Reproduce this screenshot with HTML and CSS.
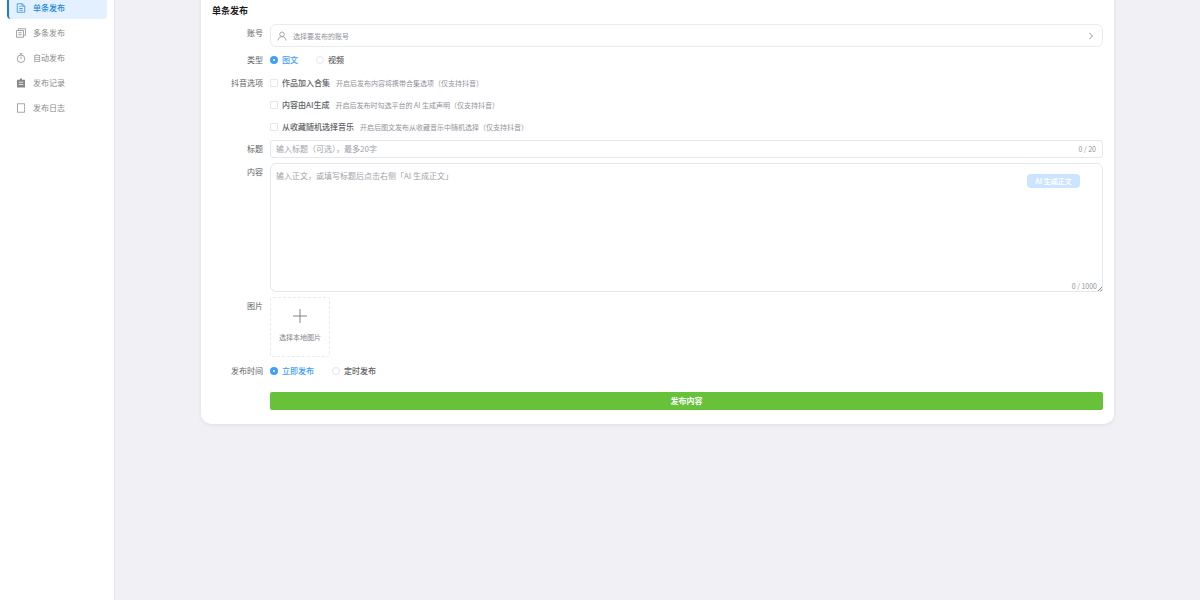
FILE: index.html
```html
<!DOCTYPE html>
<html lang="zh-CN">
<head>
  <meta charset="utf-8">
  <title>单条发布</title>
  <link rel="stylesheet" href="styles.css">
</head>
<body>
  <div class="layout">
    <nav class="sidebar">
      <a class="menu-item active" href="#">
        <svg class="icon" viewBox="0 0 20 20"><path d="M2.500 1.500h10l5 5v12h-15zM12 1.500v5h5M6.500 7h3M6.500 11h7M6.500 14.500h7"/></svg>
        单条发布
      </a>
      <a class="menu-item" href="#">
        <svg class="icon" viewBox="0 0 20 20"><path d="M5 5V1.500h14v13h-4M1 5h14v13.500H1zM4.500 9.500h7M4.500 13.500h7"/></svg>
        多条发布
      </a>
      <a class="menu-item" href="#">
        <svg class="icon" viewBox="0 0 20 20"><circle cx="10" cy="11.500" r="7.500"/><path d="M10 7v5M7 1.500h6M10 1.500V4"/></svg>
        自动发布
      </a>
      <a class="menu-item" href="#">
        <svg class="icon" viewBox="0 0 20 20"><path class="solid" d="M2 3.500h6V1h4v2.500h6V19H2z"/><path class="cut" d="M5.500 8.500h9M5.500 13h9"/></svg>
        发布记录
      </a>
      <a class="menu-item" href="#">
        <svg class="icon" viewBox="0 0 20 20"><path d="M17 1.500H3v17h14"/><path d="M17 1.500v17" stroke-width="2" stroke-dasharray="2 1"/></svg>
        发布日志
      </a>
    </nav>

    <main class="main">
      <form class="card">
        <h1 class="card-title">单条发布</h1>

        <div class="row">
          <label class="row-label" for="account">账号</label>
          <button class="account" id="account" type="button">
            <svg class="icon" viewBox="0 0 20 20"><circle cx="10" cy="6.500" r="4.500"/><path d="M2 19c0-5 3-7.500 8-7.500s8 2.500 8 7.500"/></svg>
            <span class="account-text">选择要发布的账号</span>
            <svg class="arrow" viewBox="0 0 8 8"><path d="M2.500 1l3 3-3 3"/></svg>
          </button>
        </div>

        <div class="row">
          <span class="row-label">类型</span>
          <div class="radios">
            <label class="choice"><input class="radio" type="radio" name="type" checked><span>图文</span></label>
            <label class="choice"><input class="radio" type="radio" name="type"><span>视频</span></label>
          </div>
        </div>

        <div class="row">
          <span class="row-label">抖音选项</span>
          <div class="options">
            <label class="choice"><input class="check" type="checkbox"><span>作品加入合集</span><small class="hint">开启后发布内容将携带合集选项（仅支持抖音）</small></label>
            <label class="choice"><input class="check" type="checkbox"><span>内容由AI生成</span><small class="hint">开启后发布时勾选平台的 AI 生成声明（仅支持抖音）</small></label>
            <label class="choice"><input class="check" type="checkbox"><span>从收藏随机选择音乐</span><small class="hint">开启后图文发布从收藏音乐中随机选择（仅支持抖音）</small></label>
          </div>
        </div>

        <div class="row">
          <label class="row-label" for="title">标题</label>
          <div class="title-box">
            <input class="title-input" id="title" type="text" maxlength="20" placeholder="输入标题（可选），最多20字">
            <span class="count">0 / 20</span>
          </div>
        </div>

        <div class="row">
          <label class="row-label" for="content">内容</label>
          <div class="content-box">
            <textarea class="content-input" id="content" maxlength="1000" placeholder="输入正文，或填写标题后点击右侧「AI 生成正文」"></textarea>
            <button class="ai-btn" type="button" disabled>AI 生成正文</button>
            <span class="count content-count">0 / 1000</span>
            <svg class="grip" viewBox="0 0 6 6"><path d="M1 5l4-4M3.500 5.500l2-2"/></svg>
          </div>
        </div>

        <div class="row">
          <label class="row-label" for="upload">图片</label>
          <button class="upload" id="upload" type="button">
            <svg class="plus" viewBox="0 0 14 14"><path d="M7 0v14M0 7h14"/></svg>
            选择本地图片
          </button>
        </div>

        <div class="row">
          <span class="row-label">发布时间</span>
          <div class="radios">
            <label class="choice"><input class="radio" type="radio" name="time" checked><span>立即发布</span></label>
            <label class="choice"><input class="radio" type="radio" name="time"><span>定时发布</span></label>
          </div>
        </div>

        <div class="row submit-row">
          <button class="submit" type="submit">发布内容</button>
        </div>
      </form>
    </main>
  </div>
</body>
</html>
```
FILE: styles.css
```css
* {
  box-sizing: border-box;
}
body {
  margin: 0;
  font: 8px/18px "Noto Sans CJK SC", sans-serif;
  color: #606266;
  background: #f0f0f5;
}
button, input, textarea {
  font: inherit;
  color: inherit;
  margin: 0;
}
svg {
  flex: none;
  fill: none;
  stroke: currentColor;
}
.layout {
  display: flex;
  min-height: 100vh;
}

/* sidebar, scrolled a little past its top */
.sidebar {
  display: flex;
  flex-direction: column;
  gap: 3px;
  flex: none;
  width: 115px;
  margin-top: -3px;
  padding: 0 7px;
  background: #fff;
  border-right: 1px solid #e8e8ec;
}
.menu-item {
  display: flex;
  align-items: center;
  gap: 7px;
  height: 22px;
  padding-left: 9px;
  border-radius: 4px;
  color: #888;
  text-decoration: none;
}
.menu-item.active {
  padding-left: 7px;
  border-left: 2px solid #1a7fd4;
  background: #e3f0ff;
  color: #2088d8;
  font-weight: 500;
}
.icon {
  width: 10px;
  height: 10px;
  stroke-width: 1.5;
}
.icon .solid {
  fill: currentColor;
  stroke: none;
}
.icon .cut {
  stroke: #fff;
}

/* form card */
.main {
  flex: 1;
  padding: 0 86px;
}
.card {
  display: flex;
  flex-direction: column;
  gap: 5px;
  margin-top: -10px;
  padding: 13px 11px 14px;
  background: #fff;
  border-radius: 10px;
  box-shadow: 0 1px 4px rgba(0, 0, 0, 0.08);
}
.card-title {
  margin: 0;
  font-size: 9px;
  line-height: 16px;
  color: #1a1a1a;
}
.row {
  display: flex;
  gap: 7px;
}
.row-label {
  flex: none;
  width: 51px;
  text-align: right;
}
.account {
  display: flex;
  align-items: center;
  flex: 1;
  height: 23px;
  margin-bottom: -1px;
  padding: 0 7px 0 6px;
  border: 1px solid #ebebef;
  border-radius: 6px;
  background: #fff;
  color: #909399;
}
.account-text {
  flex: 1;
  padding-left: 6px;
  font-size: 7px;
  text-align: left;
}
.arrow {
  width: 8px;
  height: 8px;
}
.radios {
  display: flex;
  gap: 18px;
}
.options {
  display: flex;
  flex-direction: column;
  gap: 4px;
  margin-bottom: -1px;
}
.choice {
  display: flex;
  align-items: center;
  gap: 4px;
  font-weight: 500;
}
.radio, .check {
  appearance: none;
  width: 8px;
  height: 8px;
  border: 1px solid #e4e6eb;
  border-radius: 50%;
  background: #fff;
}
.check {
  border-radius: 1px;
}
.radio:checked {
  border: 3px solid #409eff;
}
.radio:checked + span {
  color: #409eff;
}
.hint {
  padding-left: 2px;
  font-size: 7px;
  font-weight: 400;
  color: #909399;
}
.title-box {
  display: flex;
  flex: 1;
  height: 18px;
  padding: 0 6px 0 5px;
  border: 1px solid #e4e7ed;
  border-radius: 3px;
  line-height: 16px;
}
.title-input {
  flex: 1;
  padding: 0;
  border: 0;
  outline: 0;
  background: none;
}
.title-input::placeholder, .content-input::placeholder {
  color: #a0a2a8;
}
.count {
  font-size: 7px;
  color: #909399;
}
.content-box {
  position: relative;
  flex: 1;
}
.content-input {
  display: block;
  width: 100%;
  height: 129px;
  padding: 3px 5px;
  border: 1px solid #e4e7ed;
  border-radius: 6px;
  outline: 0;
  resize: none;
}
.ai-btn {
  position: absolute;
  top: 11px;
  right: 23px;
  width: 53px;
  height: 14px;
  padding: 0;
  border: 0;
  border-radius: 4px;
  background: #cce4ff;
  color: #fff;
  font-size: 7px;
  font-weight: 700;
  line-height: 14px;
}
.content-count {
  position: absolute;
  right: 6px;
  bottom: -3px;
}
.grip {
  position: absolute;
  right: 0;
  bottom: 0;
  width: 6px;
  height: 6px;
  color: #888;
}
.upload {
  display: flex;
  flex-direction: column;
  align-items: center;
  gap: 5px;
  width: 60px;
  height: 60px;
  padding: 11px 0 0;
  border: 1px dashed #e8eaee;
  border-radius: 3px;
  background: #fff;
  color: #808388;
  font-size: 7px;
}
.plus {
  width: 14px;
  height: 14px;
}
.submit-row {
  margin-top: 7px;
  padding-left: 58px;
}
.submit {
  flex: 1;
  height: 18px;
  padding: 0;
  border: 0;
  border-radius: 2px;
  background: #67c23a;
  color: #fff;
  font-weight: 700;
}
```
